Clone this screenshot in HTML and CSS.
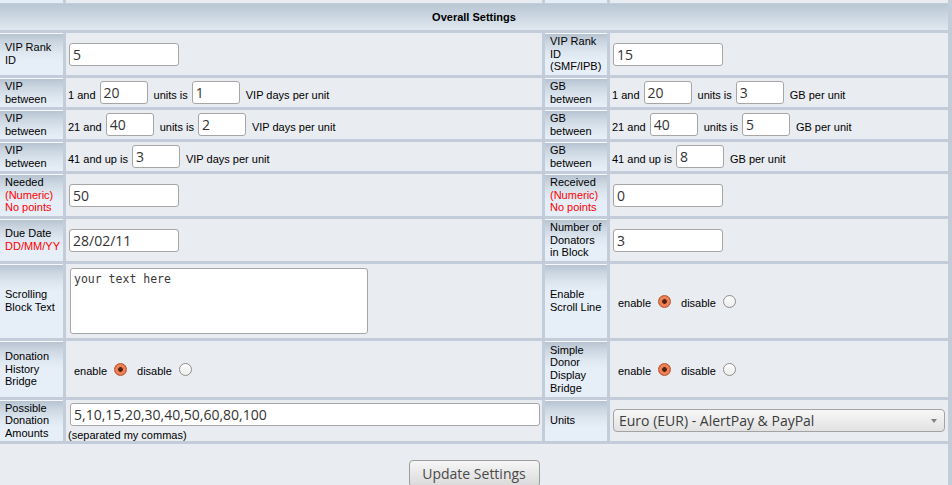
FILE: index.html
```html
<!DOCTYPE html>
<html>
<head>
<meta charset="utf-8">
<title>Overall Settings</title>
<link rel="stylesheet" href="styles.css">
</head>
<body>
<div class="page">
  <div class="grid sliver">
    <div class="lbl"></div><div class="cell"></div><div class="lbl"></div><div class="cell"></div>
  </div>
  <div class="grid form">
    <div class="head">Overall Settings</div>

    <div class="lbl">VIP Rank<br>ID</div>
    <div class="cell"><input class="in m" type="text" value="5"></div>
    <div class="lbl">VIP Rank<br>ID<br>(SMF/IPB)</div>
    <div class="cell"><input class="in m" type="text" value="15"></div>

    <div class="lbl">VIP<br>between</div>
    <div class="cell"><span class="t">1 and</span><input class="in s" type="text" value="20"><span class="t">units is</span><input class="in s" type="text" value="1"><span class="t">VIP days per unit</span></div>
    <div class="lbl">GB<br>between</div>
    <div class="cell"><span class="t">1 and</span><input class="in s" type="text" value="20"><span class="t">units is</span><input class="in s" type="text" value="3"><span class="t">GB per unit</span></div>

    <div class="lbl">VIP<br>between</div>
    <div class="cell"><span class="t">21 and</span><input class="in s" type="text" value="40"><span class="t">units is</span><input class="in s" type="text" value="2"><span class="t">VIP days per unit</span></div>
    <div class="lbl">GB<br>between</div>
    <div class="cell"><span class="t">21 and</span><input class="in s" type="text" value="40"><span class="t">units is</span><input class="in s" type="text" value="5"><span class="t">GB per unit</span></div>

    <div class="lbl">VIP<br>between</div>
    <div class="cell"><span class="t">41 and up is</span><input class="in s" type="text" value="3"><span class="t">VIP days per unit</span></div>
    <div class="lbl">GB<br>between</div>
    <div class="cell"><span class="t">41 and up is</span><input class="in s" type="text" value="8"><span class="t">GB per unit</span></div>

    <div class="lbl">Needed<br><span class="req">(Numeric)<br>No points</span></div>
    <div class="cell"><input class="in m" type="text" value="50"></div>
    <div class="lbl">Received<br><span class="req">(Numeric)<br>No points</span></div>
    <div class="cell"><input class="in m" type="text" value="0"></div>

    <div class="lbl">Due Date<br><span class="req">DD/MM/YY</span></div>
    <div class="cell"><input class="in m" type="text" value="28/02/11"></div>
    <div class="lbl">Number of<br>Donators<br>in Block</div>
    <div class="cell"><input class="in m" type="text" value="3"></div>

    <div class="lbl">Scrolling<br>Block Text</div>
    <div class="cell"><textarea class="ta">your text here</textarea></div>
    <div class="lbl">Enable<br>Scroll Line</div>
    <div class="cell radios"><span class="t">enable</span><input class="rd" type="radio" name="scroll" checked><span class="t">disable</span><input class="rd" type="radio" name="scroll"></div>

    <div class="lbl">Donation<br>History<br>Bridge</div>
    <div class="cell radios"><span class="t">enable</span><input class="rd" type="radio" name="hist" checked><span class="t">disable</span><input class="rd" type="radio" name="hist"></div>
    <div class="lbl">Simple<br>Donor<br>Display<br>Bridge</div>
    <div class="cell radios"><span class="t">enable</span><input class="rd" type="radio" name="simple" checked><span class="t">disable</span><input class="rd" type="radio" name="simple"></div>

    <div class="lbl">Possible<br>Donation<br>Amounts</div>
    <div class="cell"><div class="stack"><input class="in l" type="text" value="5,10,15,20,30,40,50,60,80,100"><span class="note">(separated my commas)</span></div></div>
    <div class="lbl">Units</div>
    <div class="cell"><span class="sel"><select class="select"><option>Euro (EUR) - AlertPay &amp; PayPal</option></select></span></div>

    <div class="foot"><button class="btn" type="button">Update Settings</button></div>
  </div>
</div>
</body>
</html>
```

FILE: styles.css
```css
* { box-sizing: border-box; }
html, body { margin: 0; padding: 0; }
body {
  width: 952px;
  height: 485px;
  overflow: hidden;
  background: #c2cdd9;
  font-family: "Liberation Sans", Arial, sans-serif;
  font-size: 11px;
  color: #000;
}
.page {
  background: #c2cdd9;
  padding-right: 4px;
}
.grid {
  display: grid;
  grid-template-columns: 63px 476px 62px 338px;
  column-gap: 3px;
}
.sliver {
  height: 3px;
  margin-bottom: 1px;
}
.form {
  row-gap: 3px;
  grid-template-rows: 26px 42px 29px 29px 29px 42px 42px 74px 56px 41px 60px;
}
.head {
  grid-column: 1 / -1;
  background: linear-gradient(to bottom, #b9c7d4, #e0e8f0);
  font-weight: bold;
  display: flex;
  align-items: center;
  justify-content: center;
}
.lbl {
  background: #e6eef7 linear-gradient(to bottom, #b4c1ce 0, #cbd6e1 9px, #dfe8f1 20px, #e6eef7 28px) no-repeat;
  box-shadow: inset 0 1px #f6f9fc;
  padding: 0 2px 0 5px;
  display: flex;
  flex-direction: column;
  justify-content: center;
  line-height: 12.65px;
  white-space: nowrap;
  overflow: hidden;
}
.sliver .lbl { background: #e5edf6; box-shadow: none; }
.req { color: #f00; }
.cell {
  background: #e9ecf1;
  display: flex;
  align-items: center;
  padding: 0 2px;
  white-space: nowrap;
}
.t { padding-top: 4px; }
.in {
  height: 23px;
  border: 1px solid #a6a6a6;
  border-radius: 3px;
  background: #fff;
  font-family: "Open Sans", sans-serif;
  font-size: 14px;
  color: #333;
  padding: 0 3px;
  margin: 0;
  outline: none;
}
.in.m { width: 110px; margin-left: 1px; }
.in.s { width: 48px; margin: 0 6px 0 4px; }
.in.l { width: 470px; margin-left: 2px; }
.stack {
  display: flex;
  flex-direction: column;
  align-items: flex-start;
  padding-top: 2px;
}
.note { margin-top: 3px; }
.ta {
  width: 298px;
  height: 66px;
  margin: 0 0 0 2px;
  border: 1px solid #a6a6a6;
  border-radius: 3px;
  background: #fff;
  font-family: "DejaVu Sans Mono", monospace;
  font-size: 11.5px;
  color: #3a3a3a;
  padding: 3px 3px;
  resize: none;
  outline: none;
}
.radios { padding-left: 8px; }
.rd {
  -webkit-appearance: none;
  appearance: none;
  width: 13px;
  height: 13px;
  margin: 0 10px 0 7px;
  border-radius: 50%;
  border: 1px solid #8e8e8e;
  background: linear-gradient(to bottom, #ffffff, #ececec);
}
.rd:checked {
  border-color: #b5522c;
  background: radial-gradient(circle at 50% 50%, #4d2312 0, #4d2312 2px, #e9744a 2.6px, #f0865c 4px, #dc5a2c 100%);
}
.sel {
  position: relative;
  display: inline-block;
  margin-left: 1px;
}
.sel::after {
  content: "";
  position: absolute;
  right: 8px;
  top: 10px;
  border-left: 3.5px solid transparent;
  border-right: 3.5px solid transparent;
  border-top: 4px solid #808080;
}
.select {
  -webkit-appearance: none;
  appearance: none;
  width: 332px;
  height: 23px;
  border: 1px solid #a3a3a3;
  border-radius: 4px;
  background: linear-gradient(to bottom, #f7f7f7, #e2e2e2);
  font-family: "Open Sans", sans-serif;
  font-size: 14px;
  color: #3c3c3c;
  padding: 0 0 0 5px;
  margin: 0;
  outline: none;
}
.foot {
  grid-column: 1 / -1;
  background: #e9ecf1;
  display: flex;
  justify-content: center;
  align-items: flex-start;
  padding-top: 16px;
}
.btn {
  width: 131px;
  height: 27px;
  border: 1px solid #9d9d9d;
  border-radius: 4px;
  background: linear-gradient(to bottom, #f6f6f6, #dadada);
  font-family: "Open Sans", sans-serif;
  font-size: 14px;
  color: #4a4a4a;
  padding: 0;
  margin: 0;
}
```
